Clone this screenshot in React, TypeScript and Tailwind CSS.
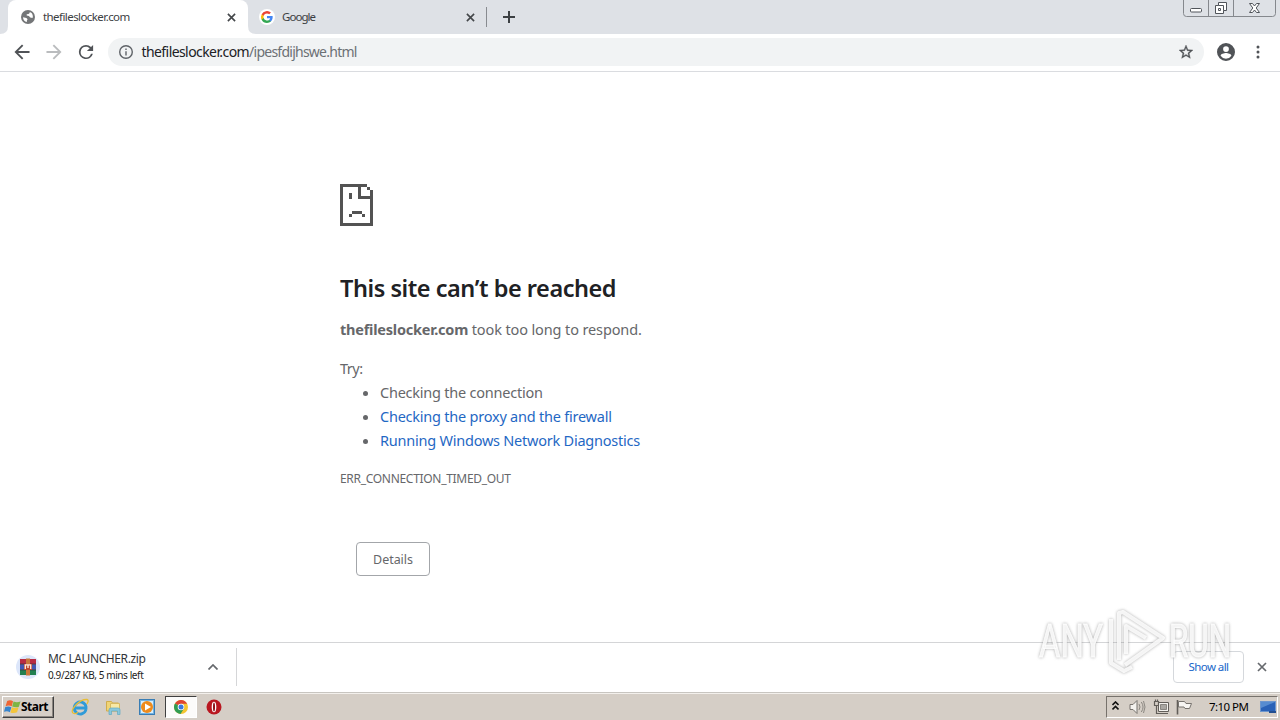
import React from "react";

const ui = "font-['Noto_Sans','Open_Sans',sans-serif]";

function Globe() {
  return (
    <svg width="14" height="14" viewBox="0 0 14 14" className="shrink-0">
      <circle cx="7" cy="7" r="7" fill="#747678" />
      <path d="M2 7.2l3.4.8 1.2 1.3-.7 1.2v1.6C3.700 11.700 2 9.800 2 7.200zM8.700 2v.9L7.500 4 5.700 4.300v1.200l2.200.4 1.300 1.500 2.300.5c.4-.8.500-1.800.2-2.700C11.200 3.500 10.200 2.400 8.700 2z" fill="#fff" />
    </svg>
  );
}

function GoogleG() {
  return (
    <svg width="16" height="16" viewBox="0 0 16 16" className="shrink-0">
      <circle cx="8" cy="8" r="8" fill="#fff" />
      <g transform="translate(1.500 1.500) scale(.27)">
        <path fill="#4285F4" d="M45.100 24.500c0-1.600-.1-3.100-.4-4.500H24v8.500h11.800a10 10 0 0 1-4.400 6.600v5.500h7.100c4.200-3.800 6.600-9.500 6.600-16.100z" />
        <path fill="#34A853" d="M24 46c5.900 0 10.900-2 14.600-5.300l-7.100-5.500a13.300 13.300 0 0 1-19.800-7H4.300v5.700A22 22 0 0 0 24 46z" />
        <path fill="#FBBC05" d="M11.700 28.200a13 13 0 0 1 0-8.400v-5.700H4.300a22 22 0 0 0 0 19.800z" />
        <path fill="#EA4335" d="M24 10.800c3.200 0 6.100 1.100 8.400 3.300l6.300-6.300A22 22 0 0 0 4.300 14.100l7.400 5.700A13 13 0 0 1 24 10.800z" />
      </g>
    </svg>
  );
}

function Cross({ size = 9, color = "#44474a", w = 1.8 }: { size?: number; color?: string; w?: number }) {
  return (
    <svg width={size} height={size} viewBox="0 0 10 10" className="shrink-0">
      <path d="M1 1l8 8M9 1l-8 8" stroke={color} strokeWidth={w} fill="none" />
    </svg>
  );
}

function WindowButtons() {
  return (
    <svg width="97" height="18" viewBox="0 0 97 18" className="shrink-0">
      <path d="M.5 0v13.500q0 3 3 3h86q3 0 3-3V0M25.500 0v16M50.500 0v16" fill="none" stroke="#85888d" />
      <rect x="7.500" y="8.500" width="11" height="3.500" rx="1" fill="#fff" stroke="#50545a" />
      <path d="M35.500 2.500h8v8h-3v3h-8v-8h3z" fill="#fff" stroke="#50545a" strokeLinejoin="round" />
      <path d="M35.500 5.500h5v5M35.500 8.500h2v2h-2z" fill="none" stroke="#50545a" />
      <path d="M66.500 3.500h3l2 2.500 2-2.500h3l-3.300 4.500 3.300 4.500h-3l-2-2.500-2 2.500h-3l3.300-4.500z" fill="#fff" stroke="#50545a" strokeLinejoin="round" />
    </svg>
  );
}

function TabStrip() {
  return (
    <div className="flex h-[34px] w-full bg-[#dee1e6] text-[11.5px] text-[#3c4043]">
      <div className="flex w-2 items-end">
        <svg width="8" height="8"><path d="M8 0v8H0q8 0 8-8z" fill="#fff" /></svg>
      </div>
      <div className="flex w-[240px] items-center rounded-t-lg bg-white pl-[13px] pr-[12px]">
        <Globe />
        <span className="ml-2 flex-1 whitespace-nowrap tracking-[-0.57px]">thefileslocker.com</span>
        <Cross />
      </div>
      <div className="flex w-[238px] items-center pr-[11px]">
        <svg width="8" height="8" className="self-end"><path d="M0 0v8h8q-8 0-8-8z" fill="#fff" /></svg>
        <span className="ml-[3px] flex"><GoogleG /></span>
        <span className="ml-[7px] flex-1 tracking-[-0.95px]">Google</span>
        <Cross />
      </div>
      <div className="mt-[7px] h-5 w-px bg-[#888b90]" />
      <svg width="12" height="12" viewBox="0 0 12 12" className="ml-4 mt-[11px]"><path d="M6 0v12M0 6h12" stroke="#3c4043" strokeWidth="2" /></svg>
      <div className="flex-1" />
      <WindowButtons />
    </div>
  );
}

function Toolbar() {
  return (
    <div className="flex h-[38px] items-center border-b border-[#dadce0] bg-white pb-px pl-[14px] pr-[14px]">
      <svg width="16" height="16" viewBox="3.500 3.500 17 17" fill="#505357"><path d="M20 11H7.830l5.590-5.590L12 4l-8 8 8 8 1.410-1.410L7.830 13H20v-2z" /></svg>
      <svg width="16" height="16" viewBox="3.500 3.500 17 17" fill="#babcbe" className="ml-4"><path d="M12 4l-1.410 1.410L16.170 11H4v2h12.170l-5.580 5.590L12 20l8-8z" /></svg>
      <svg width="16" height="16" viewBox="3 3 18 18" fill="#505357" className="ml-4"><path d="M17.650 6.350A7.960 7.960 0 0 0 12 4a8 8 0 1 0 7.730 10h-2.080A6 6 0 1 1 12 6c1.660 0 3.140.690 4.220 1.780L13 11h7V4l-2.350 2.350z" /></svg>
      <div className="ml-[14px] flex h-7 w-[1096px] items-center rounded-full bg-[#f1f3f4] pl-[11px] pr-[11px]">
        <svg width="14" height="14" viewBox="2 2 20 20" fill="#5f6368"><path d="M11 7h2v2h-2zm0 4h2v6h-2zm1-9a10 10 0 1 0 0 20 10 10 0 0 0 0-20zm0 18a8 8 0 1 1 0-16 8 8 0 0 1 0 16z" /></svg>
        <span className="ml-[8.500px] flex-1 whitespace-nowrap pb-[2px] text-[14px] text-[#6c7075]"><span className="tracking-[-0.58px] text-[#202124]">thefileslocker.com</span><span className="tracking-[-0.75px]">/ipesfdijhswe.html</span></span>
        <svg width="14" height="14" viewBox="2 2 20 20" fill="#505357" stroke="#505357" strokeWidth=".5"><path d="M22 9.240l-7.190-.620L12 2 9.190 8.630 2 9.240l5.460 4.730L5.820 21 12 17.270 18.180 21l-1.630-7.030L22 9.240zM12 15.400l-3.760 2.270 1-4.280-3.320-2.880 4.380-.380L12 6.100l1.710 4.040 4.380.380-3.320 2.880 1 4.280L12 15.400z" /></svg>
      </div>
      <svg width="18" height="18" viewBox="2 2 20 20" fill="#505357" className="ml-[13px]"><path d="M12 2a10 10 0 1 0 0 20 10 10 0 0 0 0-20zm0 3.500a3.200 3.200 0 1 1 0 6.400 3.200 3.200 0 0 1 0-6.400zm0 14a7.200 7.200 0 0 1-6-3.220c.03-1.990 4-3.080 6-3.080s5.970 1.090 6 3.080a7.200 7.200 0 0 1-6 3.220z" /></svg>
      <svg width="4" height="14" viewBox="0 0 4 14" fill="#505357" className="ml-[21px]"><circle cx="2" cy="2" r="1.500" /><circle cx="2" cy="7" r="1.500" /><circle cx="2" cy="12" r="1.500" /></svg>
    </div>
  );
}

function ErrorPage() {
  return (
    <main className="flex min-h-0 flex-1 flex-col items-start pl-[340px] pt-[112px] text-[#66676a]">
      <svg width="33" height="42" viewBox="0 0 33 42" shapeRendering="crispEdges" fill="#535353">
        <path d="M0 0h27v3h3v3h3v36H0zM3 3v36h27V15H18V3zM21 3v9h9V6h-3V3z" fillRule="evenodd" />
        <path d="M9 9h3v6H9zM12 27h10v3H12zM9 30h3v3H9zM22 30h3v3h-3z" />
      </svg>
      <h1 className="mt-[46px] h-8 whitespace-nowrap text-[23.5px] font-semibold leading-8 tracking-[-0.46px] text-[#202124]">This site can’t be reached</h1>
      <p className="mt-[13px] h-6 whitespace-nowrap text-[14.5px] leading-6"><b className="tracking-[-0.22px]">thefileslocker.com</b><span className="tracking-[-0.12px]"> took too long to respond.</span></p>
      <p className="mt-[15px] h-6 text-[14.5px] leading-6 tracking-[-0.5px]">Try:</p>
      <ul className="list-disc pl-10 text-[14.5px] leading-6 tracking-[-0.23px]">
        <li><span>Checking the connection</span></li>
        <li><span className="text-[#1f68c4]">Checking the proxy and the firewall</span></li>
        <li><span className="text-[#1f68c4]">Running Windows Network Diagnostics</span></li>
      </ul>
      <p className="mt-[15px] h-6 text-[12px] leading-6 tracking-[-0.3px]">ERR_CONNECTION_TIMED_OUT</p>
      <button className="ml-4 mt-[51px] h-[34px] w-[74px] rounded border border-[#a3a6aa] pt-[2px] text-[12.5px] tracking-[-0.05px]">Details</button>
    </main>
  );
}

function RarIcon() {
  return (
    <svg width="24" height="24" viewBox="0 0 24 24" className="shrink-0">
      <circle cx="12" cy="12" r="12" fill="#dce6fa" />
      <rect x="4" y="4" width="16" height="5" fill="#b82b43" />
      <rect x="4" y="9.500" width="16" height="5" fill="#4357b4" />
      <rect x="4" y="15" width="16" height="5" fill="#238050" />
      <path d="M4 9.200h16M4 14.800h16" stroke="#302c43" />
      <rect x="10" y="3.500" width="4" height="17" fill="#c9763a" />
      <rect x="8" y="9" width="8" height="6" fill="#bd4630" />
      <path d="M9.300 14V9.800h5.400V14M12 10v3" fill="none" stroke="#fff0e0" strokeWidth="1.300" />
    </svg>
  );
}

function Watermark() {
  return (
    <svg width="204" height="70" viewBox="0 0 204 70" className="pointer-events-none absolute bottom-[45px] left-[1034px] overflow-visible">
      <g fill="#fff" fillOpacity=".85" stroke="#fff" strokeOpacity=".85" strokeWidth="1" className="[filter:drop-shadow(0_0_1.5px_rgb(110_110_110_/_0.65))]" fontFamily="Roboto, Liberation Sans, sans-serif" fontSize="47">
        <text x="5" y="52" textLength="64" lengthAdjust="spacingAndGlyphs">ANY</text>
        <text x="135" y="52" textLength="62" lengthAdjust="spacingAndGlyphs">RUN</text>
        <path d="M77 14v44l13 8 8-4M85 55V8l4-1 40 26-38 27M92 49V21l20 12" fill="none" strokeWidth="4" strokeLinejoin="round" />
      </g>
    </svg>
  );
}

function DownloadBar() {
  return (
    <div className="flex h-[50px] items-center border-t border-[#d4d5d7] bg-white pb-px pr-[13px]">
      <div className="flex h-[38px] w-[237px] items-center border-r border-[#d5d6d8] pl-4 pr-[18px]">
        <RarIcon />
        <div className="ml-2 flex-1 whitespace-nowrap pb-[2px] text-[#333538]">
          <div className="h-[17px] text-[12px] leading-[17px] tracking-[-0.4px]">MC LAUNCHER.zip</div>
          <div className="h-[16px] text-[10px] leading-[16px] tracking-[-0.4px] text-[#222]">0.9/287 KB, 5 mins left</div>
        </div>
        <svg width="10" height="6" viewBox="0 0 10 6"><path d="M.5 5.500L5 1l4.500 4.500" fill="none" stroke="#65686c" strokeWidth="1.700" /></svg>
      </div>
      <div className="flex-1" />
      <button className="h-8 w-[71px] rounded border border-[#d5d8dc] text-[11.5px] tracking-[-0.6px] text-[#1a67c9]">Show all</button>
      <span className="ml-[13px] flex"><Cross size={10} color="#66696d" w={1.7} /></span>
    </div>
  );
}

function IeIcon() {
  return (
    <svg width="18" height="18" viewBox="0 0 18 18">
      <path d="M15 11.500A6 6 0 1 1 15 8.500v1.500H4" fill="none" stroke="#309bd8" strokeWidth="2.800" />
      <path d="M2 15C-1 12 8 1 16 1.500c2 .5 1 3-.3 4.500M2 15c1.500 1 4 0 5-.8" fill="none" stroke="#e7bd35" strokeWidth="1.300" />
    </svg>
  );
}

function FolderIcon() {
  return (
    <svg width="18" height="18" viewBox="0 0 18 18">
      <path d="M1.500 3.500h5l1 1.500h6v8h-12z" fill="#efd477" stroke="#d1ad4d" />
      <path d="M5.500 5.500h9v7h-9z" fill="#f8e8a5" stroke="#d8ba61" />
      <path d="M4 16.500V12q0-2 2-2h7q2 0 2 2v4.500h-2.500V13h-6v3.500z" fill="#8ac8dc" stroke="#62a9c3" strokeWidth=".7" />
    </svg>
  );
}

function MediaIcon() {
  return (
    <svg width="16" height="16" viewBox="0 0 16 16">
      <rect x=".5" y=".5" width="15" height="15" fill="#72b3e3" stroke="#397db4" />
      <rect x="2" y="2" width="12" height="12" fill="#d8effd" />
      <circle cx="8" cy="8" r="6" fill="#ee8b1c" />
      <path d="M6 4.500v7l6-3.500z" fill="#fff" />
    </svg>
  );
}

function ChromeIcon() {
  return (
    <svg width="14" height="14" viewBox="0 0 14 14">
      <circle cx="7" cy="7" r="7" fill="#f4c531" />
      <path d="M7 7L1 3.500A7 7 0 0 1 13.100 3.700H7z" fill="#df4433" />
      <path d="M1 3.400A7 7 0 0 0 6.500 14L10 8.500 7 7z" fill="#319c53" />
      <circle cx="7" cy="7" r="3.300" fill="#fff" />
      <circle cx="7" cy="7" r="2.500" fill="#3978de" />
    </svg>
  );
}

function Taskbar() {
  return (
    <div className="flex h-7 items-center border-t border-[#c8c5c0] bg-[#d5cec6] shadow-[inset_0_1px_0_#f3f0ec]">
      <button className="ml-[2px] flex h-[22px] w-[52px] items-center border border-b-[#404040] border-l-white border-r-[#404040] border-t-white pl-px shadow-[inset_-1px_-1px_0_#8b8680]">
        <svg width="17" height="16" viewBox="0 0 16 16" preserveAspectRatio="none" className="shrink-0">
          <path d="M3 2q3-1.500 5.500.3L7.300 7.300Q4.500 5.500 1.500 7.300z" fill="#ef6634" />
          <path d="M9 2.600q3 1.500 6.500 0L14 7.700q-3 1.300-6.300-.2z" fill="#7db545" />
          <path d="M1.200 8q3-1.300 5.800.2L5.500 13.200Q3 11.500 0 12.800z" fill="#3785cd" />
          <path d="M7.500 8.300q3 1.400 6.200 0L12.300 13.200q-3 1.500-6.300.2z" fill="#f3c53b" />
        </svg>
        <span className="text-[12px] font-bold tracking-[-0.5px] text-black">Start</span>
      </button>
      <div className="ml-[17px] flex"><IeIcon /></div>
      <div className="ml-4 flex"><FolderIcon /></div>
      <div className="ml-4 flex"><MediaIcon /></div>
      <div className="ml-[10px] flex h-[22px] w-8 items-center justify-center border border-b-white border-l-[#404040] border-r-white border-t-[#404040] bg-[#fcfbfa]"><ChromeIcon /></div>
      <svg width="16" height="16" viewBox="0 0 16 16" className="ml-[9px]"><circle cx="8" cy="8" r="7.500" fill="#b91720" /><ellipse cx="8" cy="8" rx="2.300" ry="5.300" fill="#fff" /><ellipse cx="8" cy="8" rx="1" ry="4.500" fill="#8e1018" /></svg>
      <div className="flex-1" />
      <div className="mr-[2px] flex h-[22px] w-[172px] items-center border border-b-white border-l-[#77726c] border-r-white border-t-[#77726c]">
        <svg width="7" height="10" viewBox="0 0 7 10" className="mb-[2px] ml-[5px] shrink-0"><path d="M.5 4l3-3 3 3M.5 8.500l3-3 3 3" fill="none" stroke="#111" strokeWidth="1.600" /></svg>
        <svg width="17" height="16" viewBox="0 0 17 16" className="ml-[10px] shrink-0"><path d="M1 5.500h3l4-4v13l-4-4H1z" fill="#f4f2ee" stroke="#77736e" /><path d="M10 5q2 3 0 6M12.300 3q3.500 5 0 10M14.500 2q3 6 0 12" fill="none" stroke="#8c8882" /></svg>
        <svg width="17" height="16" viewBox="0 0 17 16" className="ml-[7px] shrink-0"><path d="M5.500 3.500h10v9h-10z" fill="#f4f2ee" stroke="#625e59" /><path d="M7.500 5.500h6v5h-6z" fill="#aaa7a2" stroke="#77736e" strokeWidth=".8" /><path d="M1.500 2.500v4h4v-4zM2.500.5v2M4.500.5v2M3.500 6v8.500h10M9 14.500h6" fill="none" stroke="#625e59" strokeWidth="1.200" /></svg>
        <svg width="17" height="16" viewBox="0 0 17 16" className="ml-[6px] shrink-0"><path d="M1.500 1v14.500" stroke="#625e59" strokeWidth="1.600" /><path d="M2.500 2.500h6l1.500 2h5.500l-2 5H9l-1-1.500H2.500z" fill="#f7f5f2" stroke="#77736e" /></svg>
        <span className="ml-4 w-[40px] shrink-0 whitespace-nowrap text-[11.5px] tracking-[-0.55px] text-black">7:10 PM</span>
        <svg width="16" height="14" viewBox="0 0 16 14" className="ml-[11px] shrink-0"><rect x=".5" y="1.500" width="15" height="10" fill="#2a62b7" stroke="#6d96cd" /><path d="M1 2h14L1 8z" fill="#578cd0" /><path d="M9 11h7v2H9z" fill="#234f91" /></svg>
      </div>
    </div>
  );
}

export default function App() {
  return (
    <div className={`relative flex h-[720px] w-[1280px] flex-col overflow-hidden bg-white ${ui}`}>
      <TabStrip />
      <Toolbar />
      <ErrorPage />
      <DownloadBar />
      <Taskbar />
      <Watermark />
    </div>
  );
}
